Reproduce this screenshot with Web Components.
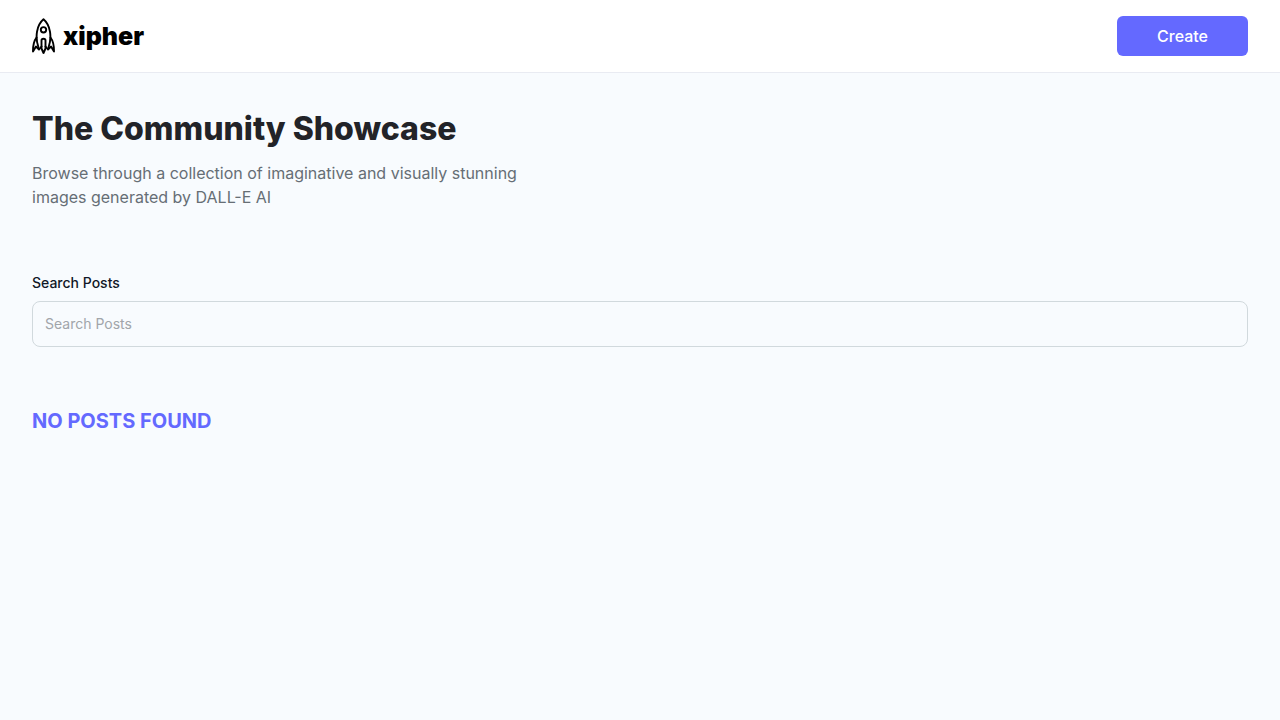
<!DOCTYPE html>
<html lang="en">
<head>
<meta charset="utf-8">
<meta name="viewport" content="width=device-width, initial-scale=1">
<title>xipher</title>
<style>
html, body { margin: 0; min-height: 100%; background: #f8fbfe; font-family: Inter, sans-serif; }
</style>
</head>
<body>
<showcase-app></showcase-app>
<script>
function define(name, html) {
  const template = document.createElement('template');
  template.innerHTML = '<style>*{box-sizing:border-box}</style>' + html;
  customElements.define(name, class extends HTMLElement {
    constructor() {
      super();
      this.attachShadow({ mode: 'open' }).append(template.content.cloneNode(true));
    }
  });
}

define('brand-logo', `
<style>
:host { display: block; }
a { display: flex; align-items: center; gap: 7px; color: #000; text-decoration: none; font: 900 25px/32px Inter, sans-serif; }
svg { display: block; width: 24px; height: 36px; }
</style>
<a href="#"><svg viewBox="0 0 24 36" fill="none" stroke="#000" stroke-width="1.9" stroke-linejoin="round" stroke-linecap="round" aria-hidden="true">
<path d="M6.500 29.500C2.800 19 4.600 7 11.500 1.200C18.400 7 20.200 19 16.500 29.500"/>
<circle cx="11.500" cy="11.800" r="2.700"/>
<path d="M4.500 19.500C1.800 23 .9 26 1 33.500L4 28.500L7 31.500L9.500 28.500"/>
<path d="M18.500 19.500C21.200 23 22.100 26 22 33.500L19 28.500L16 31.500L13.500 28.500"/>
<path d="M9.500 22.500Q9.500 20.800 11.500 20.800Q13.500 20.800 13.500 22.500V30.500L11.500 35L9.500 30.500Z"/>
</svg><span>xipher</span></a>`);

define('action-button', `
<style>
:host { display: block; }
button { display: block; border: 0; border-radius: 6px; padding: 8px 40px; background: #6469ff; color: #fff; font: 500 16px/24px Inter, sans-serif; cursor: pointer; }
</style>
<button type="button"><slot></slot></button>`);

define('site-header', `
<style>
:host { display: block; }
header { display: flex; justify-content: space-between; align-items: center; padding: 16px 32px; background: #fff; border-bottom: 1px solid #e9ebf2; }
</style>
<header><brand-logo></brand-logo><action-button>Create</action-button></header>`);

define('page-intro', `
<style>
:host { display: block; }
h1 { margin: 0; color: #222328; font-size: 32px; line-height: 48px; font-weight: 800; }
p { margin: 8px 0 0; max-width: 500px; color: #666e75; font-size: 16px; line-height: 24px; }
</style>
<h1><slot name="title"></slot></h1><p><slot></slot></p>`);

define('search-field', `
<style>
:host { display: block; }
label { display: block; margin-bottom: 8px; color: #111827; font-size: 14px; line-height: 20px; font-weight: 500; }
input { display: block; width: 100%; padding: 12px; border: 1px solid #d1d9dd; border-radius: 8px; background: transparent; color: #111827; font: 400 14px/20px Inter, sans-serif; outline-color: #4649ff; }
input::placeholder { color: #a1a5aa; opacity: 1; }
</style>
<label for="search">Search Posts</label>
<input id="search" type="text" placeholder="Search Posts">`);

define('post-results', `
<style>
:host { display: block; }
h2 { margin: 0; color: #6469ff; font-size: 20px; line-height: 20px; font-weight: 700; text-transform: uppercase; }
</style>
<h2><slot></slot></h2>`);

define('showcase-app', `
<style>
:host { display: block; }
main { display: flex; flex-direction: column; gap: 64px; padding: 32px; }
</style>
<site-header></site-header>
<main>
<page-intro><span slot="title">The Community Showcase</span>Browse through a collection of imaginative and visually stunning images generated by DALL-E AI</page-intro>
<search-field></search-field>
<post-results>No posts found</post-results>
</main>`);
</script>
</body>
</html>
